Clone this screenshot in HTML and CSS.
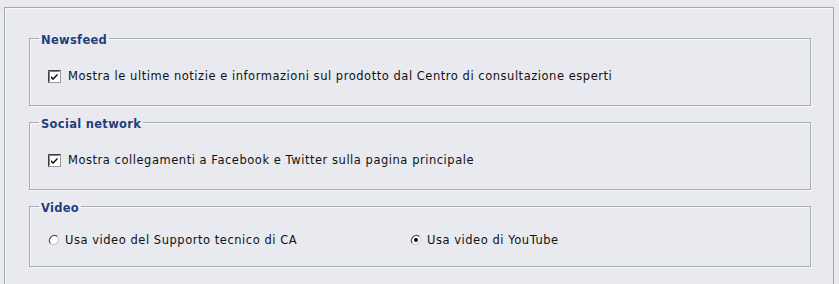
FILE: index.html
```html
<!DOCTYPE html>
<html lang="it">
<head>
<meta charset="utf-8">
<title>Impostazioni</title>
<link rel="stylesheet" href="styles.css">
</head>
<body>
<div class="panel">
  <fieldset class="group">
    <legend class="group-title">Newsfeed</legend>
    <label class="option">
      <svg class="check" width="13" height="13" viewBox="0 0 13 13"><rect x="0.5" y="0.5" width="12" height="12" fill="#fff" stroke="#9a9a9a"/><path d="M0.5 12.5V0.5H12.5" fill="none" stroke="#404040"/><path d="M1.5 11.5V1.5H11.5" fill="none" stroke="#808080"/><path d="M3 6l2 2 4.5-4.5v2L5 10 3 8z" fill="#000"/></svg>
      <span>Mostra le ultime notizie e informazioni sul prodotto dal Centro di consultazione esperti</span>
    </label>
  </fieldset>
  <fieldset class="group">
    <legend class="group-title">Social network</legend>
    <label class="option">
      <svg class="check" width="13" height="13" viewBox="0 0 13 13"><rect x="0.5" y="0.5" width="12" height="12" fill="#fff" stroke="#9a9a9a"/><path d="M0.5 12.5V0.5H12.5" fill="none" stroke="#404040"/><path d="M1.5 11.5V1.5H11.5" fill="none" stroke="#808080"/><path d="M3 6l2 2 4.5-4.5v2L5 10 3 8z" fill="#000"/></svg>
      <span>Mostra collegamenti a Facebook e Twitter sulla pagina principale</span>
    </label>
  </fieldset>
  <fieldset class="group group-video">
    <legend class="group-title">Video</legend>
    <div class="radios">
      <label class="option">
        <svg class="radio" width="12" height="12" viewBox="0 0 12 12"><circle cx="6" cy="6" r="5" fill="#fff"/><path d="M2.5 9.5A5 5 0 0 1 9.5 2.5" fill="none" stroke="#555" stroke-width="1.2"/><path d="M9.5 2.5A5 5 0 0 1 2.5 9.5" fill="none" stroke="#d0d0d0" stroke-width="1.2"/></svg>
        <span>Usa video del Supporto tecnico di CA</span>
      </label>
      <label class="option">
        <svg class="radio" width="12" height="12" viewBox="0 0 12 12"><circle cx="6" cy="6" r="5" fill="#fff"/><path d="M2.5 9.5A5 5 0 0 1 9.5 2.5" fill="none" stroke="#555" stroke-width="1.2"/><path d="M9.5 2.5A5 5 0 0 1 2.5 9.5" fill="none" stroke="#d0d0d0" stroke-width="1.2"/><circle cx="6" cy="6" r="2" fill="#000"/></svg>
        <span>Usa video di YouTube</span>
      </label>
    </div>
  </fieldset>
</div>
</body>
</html>
```

FILE: styles.css
```css
html, body {
  margin: 0;
  padding: 0;
  background: #e8eaef;
  font-family: "DejaVu Sans", Verdana, sans-serif;
  font-size: 11.5px;
  letter-spacing: 0.53px;
  color: #111;
}

.panel {
  margin: 7px 5px 0 4px;
  border: 1px solid #a6a9b2;
  box-shadow: inset 1px 1px 0 #f7f8fa;
  padding: 21px 22px 0 24px;
  min-height: 300px;
  box-sizing: border-box;
}

.group {
  margin: 0 0 7px 0;
  padding: 21px 18px 21px 18px;
  border: 1px solid #a9acb5;
  box-shadow: 1px 1px 0 #f7f8fa, inset 1px 1px 0 #f7f8fa;
  min-width: 0;
}

.group-title {
  margin-left: -9px;
  padding: 4px 2px 0 2px;
  line-height: 14px;
  font-weight: bold;
  font-size: 11.5px;
  letter-spacing: 0.3px;
  color: #1f3e7a;
}

.option {
  display: flex;
  align-items: center;
  height: 16px;
  line-height: 16px;
  white-space: nowrap;
}

.check {
  flex: none;
  margin-right: 7px;
}

.radio {
  flex: none;
  margin-right: 5px;
}

.group-video {
  padding-top: 17px;
  padding-bottom: 18px;
}

.radios {
  display: grid;
  grid-template-columns: 362px 1fr;
}
```
